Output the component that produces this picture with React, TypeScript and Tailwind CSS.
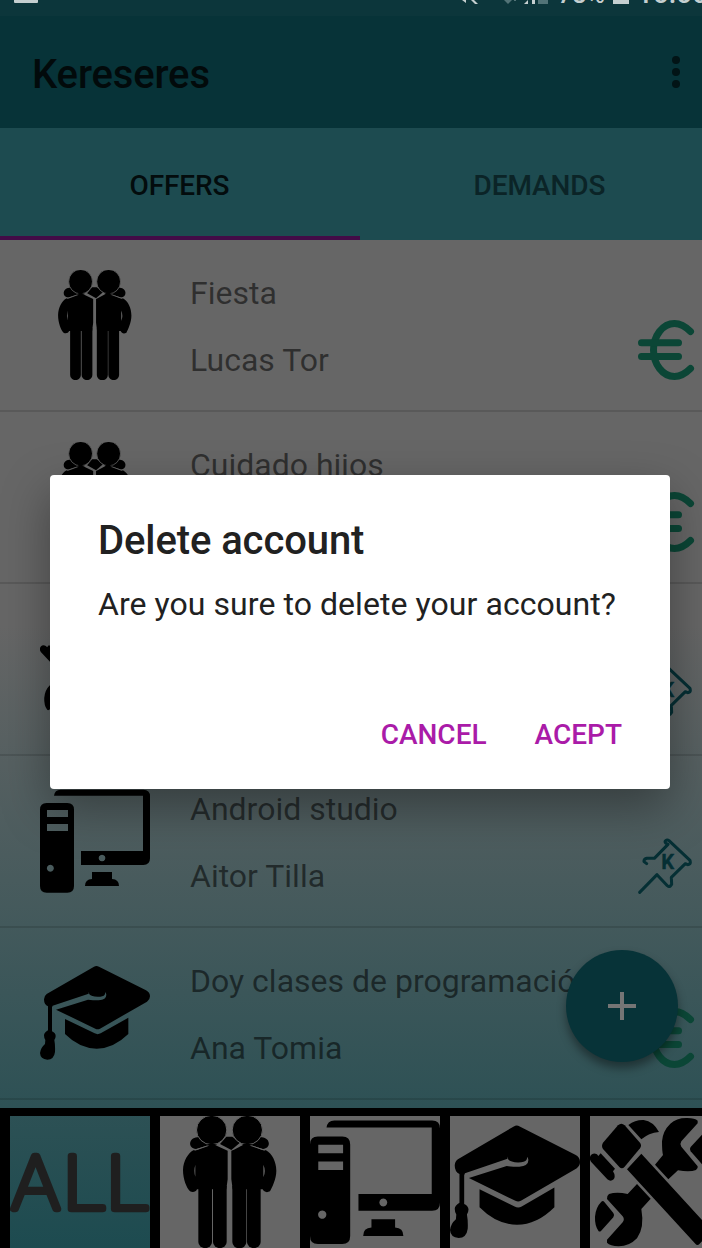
import React from "react";

type IconProps = { className?: string };

function PeopleIcon({ className }: IconProps) {
  return (
    <svg viewBox="0 0 420 396" preserveAspectRatio="none" className={className}>
      <g fill="#000">
        <path d="M112 64C84 66 84 98 108 99L150 86L120 62Z" />
        <path d="M305 64C333 66 333 98 309 99L267 86L298 62Z" />
        <path d="M180 84L199 62H217L240 80L214 102Z" />
        <path d="M112 101L150 86L165 87L203 104V190L199 220H115L111 220C108 228 98 230 90 226C80 216 69 190 69 162C70 135 84 112 100 103Z" />
        <path d="M214 104L222 101L250 86L268 86L305 101L318 103C336 112 349 138 349 164C349 190 336 214 330 226C320 231 312 228 308 220H218L214 190Z" />
        <path d="M115 210H156V378A20 18 0 0 1 115 378Z" />
        <path d="M159 210H200V378A20 18 0 0 1 159 378Z" />
        <path d="M217 210H259V378A20 18 0 0 1 217 378Z" />
        <path d="M261 210H302V378A20 18 0 0 1 261 378Z" />
      </g>
      <g fill="none" stroke="#666" strokeWidth="3">
        <path d="M104 103L150 87M170 84L208 103M268 87L314 103" />
        <path d="M232 90L250 86" opacity=".6" />
      </g>
      <path d="M106 146Q100 165 106 182Z M310 146Q319 165 310 184Z" fill="#666" />
      <g fill="#000" stroke="#666" strokeWidth="3">
        <ellipse cx="155" cy="42" rx="45.500" ry="44" />
        <ellipse cx="262" cy="42" rx="45.500" ry="44" />
      </g>
      <path d="M140 87L155 92L172 86L160 83H148Z M245 87L262 92L278 86L266 83H252Z" fill="#000" />
    </svg>
  );
}

function ComputerIcon({ className }: IconProps) {
  return (
    <svg viewBox="0 0 330 330" preserveAspectRatio="none" className={className}>
      <path
        fillRule="evenodd"
        d="M42 29Q44 11 62 11H310Q330 11 330 31V217Q330 237 310 237H123V195H309V29Z M186 206A10 10 0 1 0 186.1 206Z"
      />
      <path d="M156 258H216V279Q237 280 237 300H135Q135 280 156 279Z" />
      <path
        fillRule="evenodd"
        d="M20 51H82Q102 51 102 71V300Q102 320 82 320H20Q0 320 0 300V71Q0 51 20 51Z M21 72V93H84V72Z M21 114V135H84V114Z M31 236A10.500 10.500 0 1 0 31.100 236Z"
      />
    </svg>
  );
}

function CapIcon({ className }: IconProps) {
  return (
    <svg viewBox="0 0 330 330" preserveAspectRatio="none" className={className}>
      <path d="M162 26Q169 22 177 26L318 97Q330 103 330 115Q330 125 321 131L180 212Q173 216 166 212L48 155L144 125Q158 127 176 127Q199 125 199 110L197 102L194 110Q190 116 173 116Q154 116 148 109L146 101V107L38 143L36 148V220Q47 225 47 234Q47 240 43 246Q46 262 45 282Q42 305 22 305Q1 303 0 285Q2 269 15 258L16 246Q12 240 12 232Q12 224 24 217V145Q12 140 12 124Q12 114 20 108Z" />
      <path d="M75 183L164 226Q173 231 182 226L265 179V228Q220 272 170 272Q118 271 75 228Z" />
    </svg>
  );
}

function ToolsIcon({ className }: IconProps) {
  return (
    <svg viewBox="0 0 390 396" preserveAspectRatio="none" className={className}>
      <path d="M84 28Q94 19 104 28L150 80Q156 88 150 97L104 152Q96 161 88 153L39 99Q33 90 39 80Z" />
      <path d="M115 27Q136 11 161 12Q190 16 207 48Q176 51 154 70Z" />
      <path d="M154 113L111 160L316 383Q322 391 329 383L366 345Z" />
      <path d="M3 117Q10 109 21 115L25 120L32 112L75 158L69 166Q78 180 71 190Q62 198 52 190L3 137Q-4 127 3 117Z" />
      <path d="M195 146L219 117Q216 106 216 76Q218 45 241 23Q260 5 292 6Q315 7 323 14V22L274 76Q269 83 274 92L323 151Q325 156 318 162Q300 169 264 163L235 190Z" />
      <path d="M336 56L302 93Q298 99 302 106L336 145L390 120V56Z" />
      <path d="M141 204L182 248L154 279Q164 335 141 367Q118 391 86 391Q60 390 51 380V371L98 319Q105 310 98 301L51 249Q50 239 57 234Q80 226 113 234Z" />
      <path d="M34 257Q39 253 43 258L70 291Q75 298 70 304L33 345Q28 349 25 344Q14 328 15 302Q17 274 34 257Z" />
    </svg>
  );
}

function EuroIcon() {
  return (
    <svg viewBox="0 0 60 60" className="h-[60px] w-[60px]" fill="none" stroke="#0b4636" strokeWidth="7" strokeLinecap="round">
      <path d="M52.500 11.500C47 6 42 3.500 36.500 3.500C24.500 3.500 15.500 16 15.500 30S24.500 56.500 36.500 56.500C42 56.500 47 54 52.500 48.500" />
      <path d="M3.500 22.700H40.500M3.500 36.500H40.500" />
    </svg>
  );
}

function PinIcon() {
  return (
    <svg viewBox="0 0 180 180" className="h-[60px] w-[60px]" fill="none" stroke="#052f34" strokeWidth="9" strokeLinecap="round" strokeLinejoin="round">
      <path d="M5 169L57 116L88 149Q92 154 97 150L101 145L100 124L142 83L149 86Q157 86 157 79L156 73L93 14Q87 9 82 15Q80 19 84 22L90 25L49 67H27Q17 69 18 77L26 83" />
      <text x="70" y="98" fontFamily="Roboto, sans-serif" fontWeight="700" fontSize="61" fill="#052f34" strokeWidth="1">
        K
      </text>
    </svg>
  );
}

const offers = [
  { title: "Fiesta", author: "Lucas Tor", Icon: PeopleIcon, paid: true },
  { title: "Cuidado hijos", author: "", Icon: PeopleIcon, paid: true },
  { title: "", author: "", Icon: ToolsIcon, paid: false },
  { title: "Android studio", author: "Aitor Tilla", Icon: ComputerIcon, paid: false },
  { title: "Doy clases de programación", author: "Ana Tomia", Icon: CapIcon, paid: true },
];

function StatusBar() {
  return (
    <div className="flex h-4 items-start overflow-hidden bg-[#0c363b] text-[#c5cfd0]">
      <div className="ml-3.5 h-[3px] w-6 rounded-b-[1px] bg-current" />
      <svg viewBox="0 0 90 5" className="ml-[424px] h-[5px] w-[90px] shrink-0">
        <path d="M0 0H4V3ZM9 0H12L16 4H13Z" fill="#c5cfd0" />
        <path d="M42 0H50L46 4ZM52 0H54V1H52Z" fill="#527377" />
        <path d="M62 4L66 0V4ZM70 0H73V4H70Z" fill="#c5cfd0" />
        <path d="M76 0H86V4H76Z" fill="#527377" />
      </svg>
      <div className="-mt-[21px] ml-[6px] w-[55px] shrink-0 text-[25px] leading-8 font-medium">78%</div>
      <div className="h-1 w-4 shrink-0 bg-current" />
      <div className="-mt-[22px] ml-2 shrink-0 text-[28px] leading-8 font-medium">10:00</div>
    </div>
  );
}

export default function App() {
  return (
    <div className="relative h-[1248px] w-[702px] overflow-hidden bg-[#666] font-['Roboto',sans-serif]">
      <div className="flex h-full w-[720px] flex-col">
        <StatusBar />
        <header className="flex h-28 items-center justify-between bg-[#073338] pr-10 pl-8">
          <h1 className="mt-1.5 text-[40px] leading-[48px] font-medium tracking-[-0.15px] text-[#020a0b]">Kereseres</h1>
          <div className="flex flex-col gap-1">
            <i className="size-2 rounded-full bg-[#021416]" />
            <i className="size-2 rounded-full bg-[#021416]" />
            <i className="size-2 rounded-full bg-[#021416]" />
          </div>
        </header>
        <nav className="grid h-28 grid-cols-2 bg-[#1d4b50] text-[28px] font-medium tracking-[-0.1px]">
          <div className="flex items-center justify-center border-b-4 border-[#430b47] pt-2 pr-px text-[#030c0d]">OFFERS</div>
          <div className="flex items-center justify-center border-b-4 border-transparent pt-2 pr-px text-[#0b2427]">DEMANDS</div>
        </nav>
        <main className="flex min-h-0 flex-1 flex-col bg-[linear-gradient(to_bottom,#666_0px,#666_385px,#1d4b50_1008px)]">
          <ul className="h-[868px] shrink-0">
            {offers.map(({ title, author, Icon, paid }, index) => (
              <li key={index} className="flex h-[172px] border-b-2 border-black/12 pl-10">
                <Icon className="mt-[30px] h-[110px] w-[110px]" />
                <div className="ml-10 w-[448px] pt-[34px] text-[32px] leading-[38px] whitespace-nowrap text-black/54">
                  <p>{title}</p>
                  <p className="mt-[29px]">{author}</p>
                </div>
                <div className="mt-20">{paid ? <EuroIcon /> : <PinIcon />}</div>
              </li>
            ))}
          </ul>
          <div className="flex h-[140px] shrink-0 border-t-8 border-l-10 border-black">
            <div className="h-[132px] w-[140px]">
              <svg viewBox="0 0 420 396" className="h-full w-full">
                <g fontFamily="Inter, sans-serif" fontWeight="100" fontSize="218" fill="#1f1f1f" stroke="#1f1f1f" strokeWidth="20" strokeLinejoin="round">
                  <text x="3" y="279" transform="scale(1.06 1)">A</text>
                  <text x="141 258" y="279" transform="scale(1.11 1)">LL</text>
                </g>
              </svg>
            </div>
            <div className="w-2.5 bg-black" />
            <div className="h-[132px] w-[140px] bg-[#666]"><PeopleIcon className="h-full w-full" /></div>
            <div className="w-2.5 bg-black" />
            <div className="h-[132px] w-[130px] bg-[#666]"><ComputerIcon className="h-full w-full" /></div>
            <div className="w-2.5 bg-black" />
            <div className="h-[132px] w-[130px] bg-[#666]"><CapIcon className="h-full w-full" /></div>
            <div className="w-2.5 bg-black" />
            <div className="h-[132px] w-[130px] bg-[#666]"><ToolsIcon className="h-full w-full" /></div>
          </div>
        </main>
      </div>

      <button className="absolute top-[950px] left-[566px] flex size-28 items-center justify-center rounded-full bg-[#073338] shadow-[0_6px_10px_rgba(0,0,0,0.4)]">
        <svg viewBox="0 0 28 28" className="size-7" stroke="#757575" strokeWidth="4">
          <path d="M14 0V28M0 14H28" />
        </svg>
      </button>

      <section className="absolute top-[475px] left-[50px] flex h-[314px] w-[620px] flex-col rounded bg-white px-12 pt-[42px] text-[#212121] shadow-[0_18px_48px_rgba(0,0,0,0.36)]">
        <h2 className="text-[40px] leading-[48px] font-medium tracking-[-0.1px]">Delete account</h2>
        <p className="mt-5 text-[32px] leading-[38px] tracking-[0.06px] whitespace-nowrap">Are you sure to delete your account?</p>
        <div className="mt-[95px] flex justify-end gap-12 text-[28px] leading-[34px] font-medium text-[#aa1ba8]">
          <button>CANCEL</button>
          <button>ACEPT</button>
        </div>
      </section>
    </div>
  );
}
